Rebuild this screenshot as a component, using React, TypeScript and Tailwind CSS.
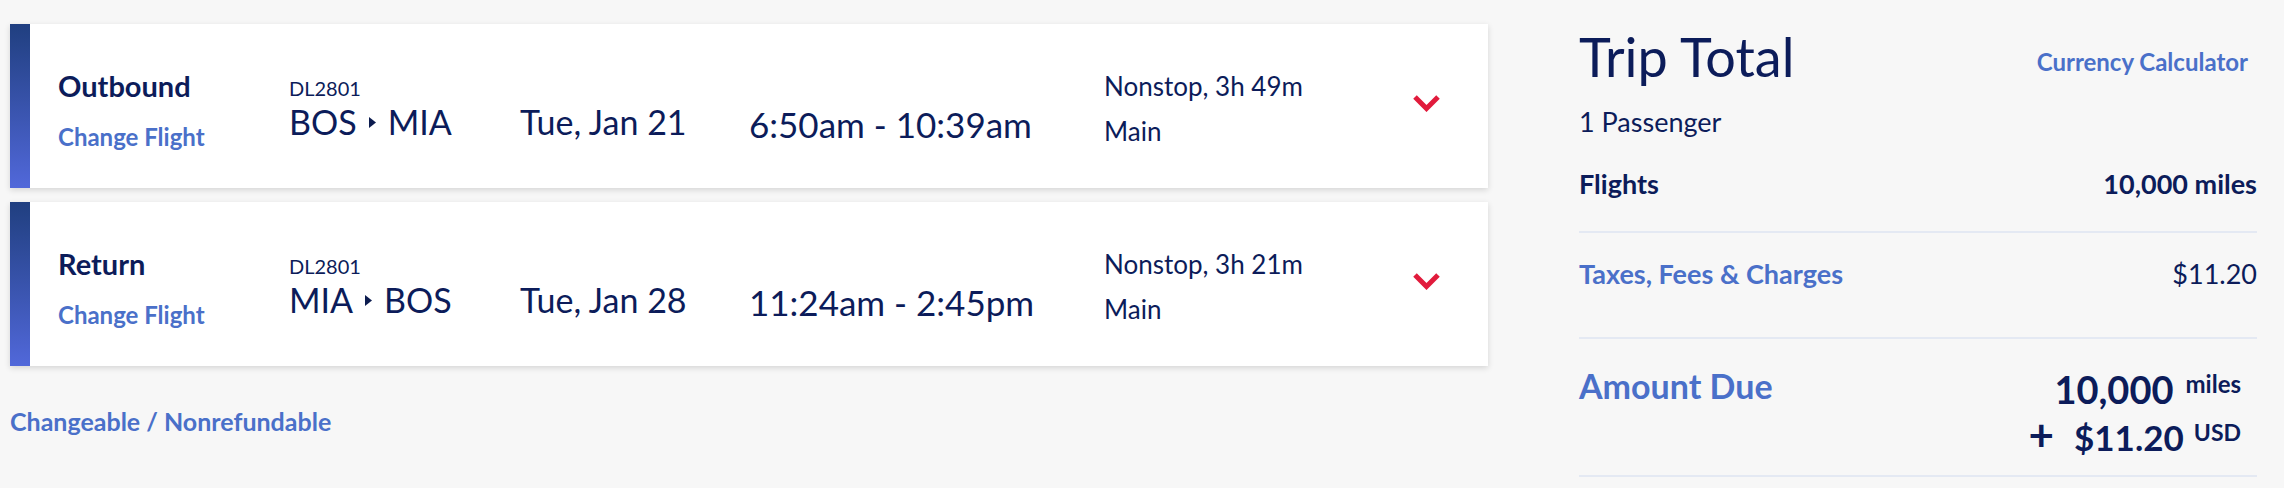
import React from 'react';

type Leg = {
  label: string;
  flight: string;
  from: string;
  to: string;
  date: string;
  times: string;
  duration: string;
  cabin: string;
};

const legs: Leg[] = [
  {
    label: 'Outbound',
    flight: 'DL2801',
    from: 'BOS',
    to: 'MIA',
    date: 'Tue, Jan 21',
    times: '6:50am - 10:39am',
    duration: 'Nonstop, 3h 49m',
    cabin: 'Main',
  },
  {
    label: 'Return',
    flight: 'DL2801',
    from: 'MIA',
    to: 'BOS',
    date: 'Tue, Jan 28',
    times: '11:24am - 2:45pm',
    duration: 'Nonstop, 3h 21m',
    cabin: 'Main',
  },
];

const Chevron: React.FC = () => (
  <svg width="27" height="17" viewBox="0 0 27 17" fill="none">
    <polyline points="2,2 13.5,13.5 25,2" stroke="#e11b3c" strokeWidth="5" strokeLinecap="butt" strokeLinejoin="miter" />
  </svg>
);

const Arrow: React.FC = () => (
  <svg width="7" height="11" viewBox="0 0 7 11" className="mx-[12px] inline-block">
    <polygon points="0,0 7,5.5 0,11" fill="#0c1c4f" />
  </svg>
);

const FlightCard: React.FC<{ leg: Leg }> = ({ leg }) => (
  <div className="flex h-[164px] bg-white shadow-[0_2px_6px_rgba(0,0,0,0.14)]">
    <div className="w-[20px] shrink-0 bg-linear-to-b from-[#203f80] to-[#5168da]" />
    <div className="flex w-[259px] shrink-0 flex-col pl-[28px]">
      <span className="mt-[45px] text-[29px] font-bold leading-[1.2]">{leg.label}</span>
      <a className="mt-[19px] text-[24px] font-bold leading-[1.2] text-[#4a70c9]">Change Flight</a>
    </div>
    <div className="flex w-[231px] shrink-0 flex-col">
      <span className="mt-[52px] text-[20px] leading-[1.2]">{leg.flight}</span>
      <span className="mt-[2px] flex items-center text-[34px] leading-[1.2]">
        {leg.from}
        <Arrow />
        {leg.to}
      </span>
    </div>
    <div className="w-[229px] shrink-0">
      <span className="mt-[78px] block text-[34px] leading-[1.2]">{leg.date}</span>
    </div>
    <div className="w-[355px] shrink-0">
      <span className="mt-[79px] block text-[35px] leading-[1.2]">{leg.times}</span>
    </div>
    <div className="flex w-[309px] shrink-0 flex-col">
      <span className="mt-[47px] text-[26px] leading-[1.2]">{leg.duration}</span>
      <span className="mt-[14px] text-[26px] leading-[1.2]">{leg.cabin}</span>
    </div>
    <div className="mt-[71px] shrink-0">
      <Chevron />
    </div>
  </div>
);

export default function App() {
  return (
    <div className="flex min-h-[488px] bg-[#f7f7f7] pl-[10px] pr-[27px] font-['Lato','Liberation_Sans',sans-serif] text-[#0c1c5a]">
      <div className="w-[1478px] shrink-0 pt-[24px]">
        <div className="flex flex-col gap-[14px]">
          {legs.map((leg) => (
            <FlightCard key={leg.label} leg={leg} />
          ))}
        </div>
        <a className="mt-[40px] block text-[25px] font-bold leading-[1.2] text-[#4a70c9]">
          Changeable / Nonrefundable
        </a>
      </div>

      <div className="ml-[91px] w-[678px] shrink-0 pt-[25px]">
        <div className="flex items-start justify-between">
          <h2 className="text-[54px] font-normal leading-[1.2]">Trip Total</h2>
          <a className="mr-[9px] mt-[23px] text-[24px] font-bold leading-[1.2] text-[#4a70c9]">
            Currency Calculator
          </a>
        </div>
        <p className="mt-[16px] text-[27px] leading-[1.2]">1 Passenger</p>

        <div className="mt-[30px] flex justify-between border-b-2 border-[#e4e9f3] pb-[30px] text-[27px] font-bold leading-[1.2]">
          <span>Flights</span>
          <span>10,000 miles</span>
        </div>

        <div className="flex justify-between border-b-2 border-[#e4e9f3] pb-[47px] pt-[25px] text-[27px] leading-[1.2]">
          <a className="font-bold text-[#4a70c9]">Taxes, Fees &amp; Charges</a>
          <span>$11.20</span>
        </div>

        <div className="flex items-start justify-between border-b-2 border-[#e4e9f3] pb-[15px] pt-[27px]">
          <span className="text-[34px] font-bold leading-[1.2] text-[#4a70c9]">Amount Due</span>
          <div className="mt-[1px] pr-[16px] text-right text-[38px] font-bold leading-[45px]">
            <div>
              <span>10,000</span>
              <span className="ml-[12px] align-[11px] text-[24px] leading-none">miles</span>
            </div>
            <div>
              <span className="mr-[20px] text-[44px] leading-none">+</span>
              <span className="text-[35px]">$11.20</span>
              <span className="ml-[10px] align-[10px] text-[23px] leading-none">USD</span>
            </div>
          </div>
        </div>
      </div>
    </div>
  );
}
